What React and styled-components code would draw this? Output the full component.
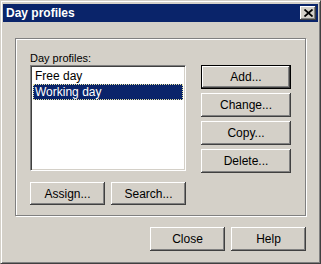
import React, { useState } from 'react';
import styled, { createGlobalStyle, css } from 'styled-components';

const Global = createGlobalStyle`
  html, body { margin: 0; padding: 0; background: #d4d0c8; }
  body { font-family: "Liberation Sans", Arial, sans-serif; font-size: 11px; color: #000; }
`;

const Window = styled.div`
  width: 321px;
  height: 264px;
  box-sizing: border-box;
  background: #d4d0c8;
  border-top: 1px solid #d4d0c8;
  border-left: 1px solid #d4d0c8;
  border-right: 1px solid #404040;
  border-bottom: 1px solid #404040;
  box-shadow: inset 1px 1px 0 #fff, inset -1px -1px 0 #808080;
  padding: 2px;
  display: flex;
  flex-direction: column;
`;

const TitleBar = styled.div`
  height: 18px;
  background: #0a246a;
  color: #fff;
  display: flex;
  align-items: center;
  justify-content: space-between;
  padding: 0 2px 0 3px;
  margin-top: 1px;
`;

const Title = styled.span`
  font-weight: bold;
  font-size: 12px;
`;

const CloseX = styled.button`
  width: 16px;
  height: 14px;
  padding: 0;
  border: 0;
  background: #d4d0c8;
  box-shadow: inset -1px -1px 0 #404040, inset 1px 1px 0 #fff, inset -2px -2px 0 #808080;
  display: flex;
  align-items: center;
  justify-content: center;
`;

const Body = styled.div`
  flex: 1;
  display: flex;
  flex-direction: column;
  padding: 16px 12px 0 12px;
`;

const Group = styled.div`
  box-sizing: border-box;
  height: 178px;
  width: 291px;
  border: 1px solid #808080;
  box-shadow: 1px 1px 0 #fff, inset 1px 1px 0 #fff;
  display: flex;
  gap: 15px;
  padding: 13px 14px 0 14px;
`;

const LeftCol = styled.div`
  display: flex;
  flex-direction: column;
  width: 156px;
`;

const Label = styled.div`
  height: 13px;
  line-height: 13px;
  font-size: 11px;
`;

const ListBox = styled.div`
  height: 106px;
  box-sizing: border-box;
  background: #fff;
  border-top: 1px solid #808080;
  border-left: 1px solid #808080;
  border-right: 1px solid #fff;
  border-bottom: 1px solid #fff;
  box-shadow: inset 1px 1px 0 #404040, inset -1px -1px 0 #d4d0c8;
  padding: 2px;
`;

const Item = styled.div`
  height: 16px;
  line-height: 16px;
  padding-left: 2px;
  font-size: 12px;
  ${(p) =>
    p.$selected &&
    css`
      background: #0a246a;
      color: #fff;
      outline: 1px dotted #e8e4a0;
      outline-offset: -1px;
    `}
`;

const ButtonRow = styled.div`
  display: flex;
  gap: 6px;
  margin-top: 11px;
`;

const RightCol = styled.div`
  display: flex;
  flex-direction: column;
  gap: 4px;
  padding-top: 13px;
`;

const Button = styled.button`
  width: ${(p) => p.$w || 75}px;
  height: ${(p) => p.$h || 23}px;
  box-sizing: border-box;
  background: #d4d0c8;
  border: 0;
  padding: 0;
  font-family: "Liberation Sans", Arial, sans-serif;
  font-size: 12px;
  color: #000;
  box-shadow: inset -1px -1px 0 #404040, inset 1px 1px 0 #fff, inset -2px -2px 0 #808080;
  ${(p) =>
    p.$default &&
    css`
      border: 1px solid #000;
    `}
`;

const Footer = styled.div`
  display: flex;
  justify-content: flex-end;
  gap: 6px;
  margin-top: 11px;
  width: 291px;
`;

const App = () => {
  const [selected, setSelected] = useState(1);
  const items = ['Free day', 'Working day'];
  return (
    <>
      <Global />
      <Window>
        <TitleBar>
          <Title>Day profiles</Title>
          <CloseX>
            <svg width="9" height="8" viewBox="0 0 9 8">
              <path d="M0.5 0.5L8.5 7.5M8.5 0.5L0.5 7.5" stroke="#000" strokeWidth="1.8" />
            </svg>
          </CloseX>
        </TitleBar>
        <Body>
          <Group>
            <LeftCol>
              <Label>Day profiles:</Label>
              <ListBox>
                {items.map((t, i) => (
                  <Item key={t} $selected={i === selected} onClick={() => setSelected(i)}>
                    {t}
                  </Item>
                ))}
              </ListBox>
              <ButtonRow>
                <Button>Assign...</Button>
                <Button>Search...</Button>
              </ButtonRow>
            </LeftCol>
            <RightCol>
              <Button $w={90} $h={24} $default>Add...</Button>
              <Button $w={90} $h={24}>Change...</Button>
              <Button $w={90} $h={24}>Copy...</Button>
              <Button $w={90} $h={24}>Delete...</Button>
            </RightCol>
          </Group>
          <Footer>
            <Button $h={24}>Close</Button>
            <Button $h={24}>Help</Button>
          </Footer>
        </Body>
      </Window>
    </>
  );
};

export default App;
